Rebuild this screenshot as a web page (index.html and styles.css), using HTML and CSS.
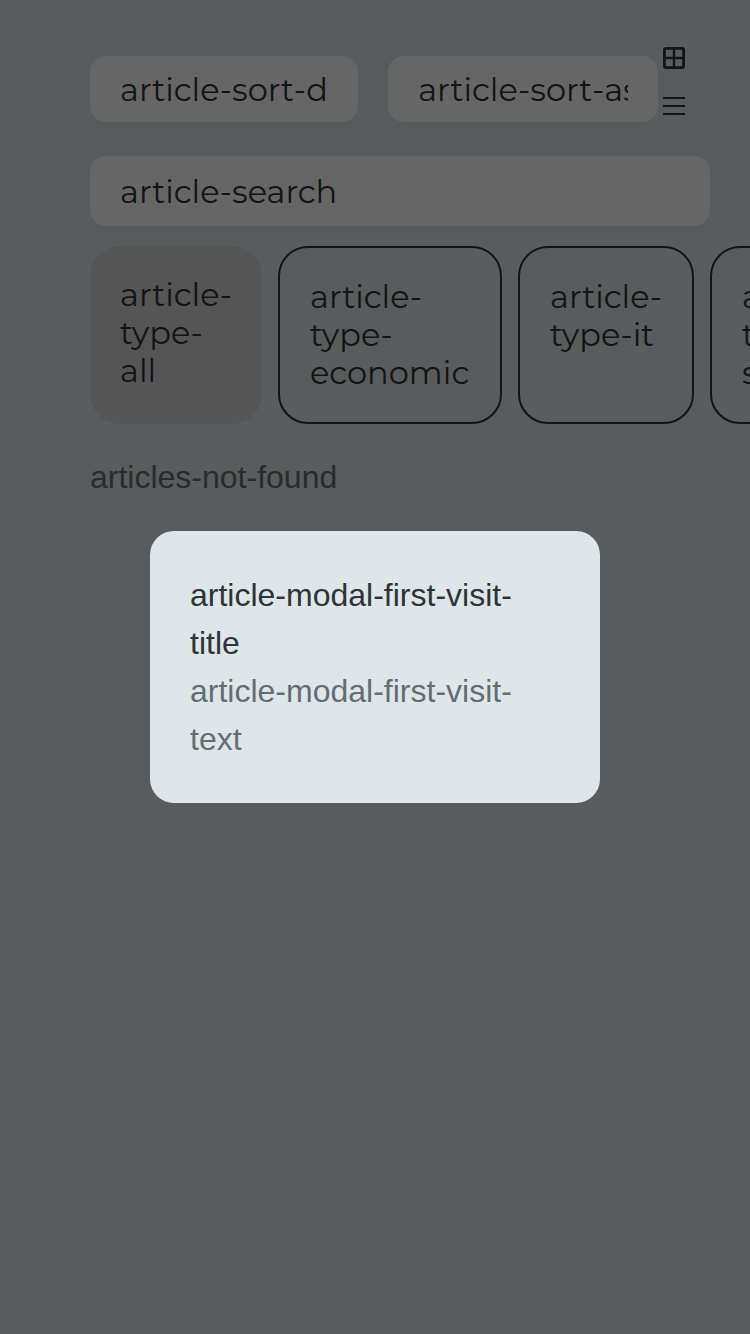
FILE: index.html
```html
<!DOCTYPE html>
<html lang="en">
<head>
<meta charset="utf-8">
<meta name="viewport" content="width=device-width, initial-scale=1">
<title>Articles</title>
<link rel="stylesheet" href="styles.css">
</head>
<body>
<main class="page">
  <div class="toolbar">
    <input class="field field-desc" type="text" aria-label="Sort descending" placeholder="article-sort-desc">
    <input class="field field-asc" type="text" aria-label="Sort ascending" placeholder="article-sort-asc">
    <div class="views">
      <button class="view" type="button" aria-label="Grid view">
        <svg width="22" height="22" viewBox="0 0 22 22" fill="none" stroke="currentColor"><rect x="1.4" y="1.4" width="19.2" height="19.2" rx="1.6" stroke-width="2.8"/><path d="M11 2v18M2 11h18" stroke-width="2.4"/></svg>
      </button>
      <button class="view" type="button" aria-label="List view">
        <svg width="22" height="22" viewBox="0 0 22 22" fill="none" stroke="currentColor" stroke-width="2"><path d="M0 3h22M0 11h22M0 19h22"/></svg>
      </button>
    </div>
  </div>
  <input class="field search" type="search" aria-label="Search" placeholder="article-search">
  <div class="types">
    <button class="type type-selected" type="button">article-type-all</button>
    <button class="type type-wide" type="button">article-type-economic</button>
    <button class="type" type="button">article-type-it</button>
    <button class="type" type="button">article-type-science</button>
  </div>
  <p class="empty">articles-not-found</p>
</main>
<div class="overlay">
  <section class="modal" role="dialog" aria-modal="true" aria-labelledby="modal-title">
    <h2 class="modal-title" id="modal-title">article-modal-first-visit-title</h2>
    <p class="modal-text">article-modal-first-visit-text</p>
  </section>
</div>
</body>
</html>
```

FILE: styles.css
```css
:root {
  --bg: #dfe6e9;
  --ink: #2d3436;
  --muted: #636e72;
  --ui-font: Montserrat, Inter, sans-serif;
}

* {
  box-sizing: border-box;
}

body {
  margin: 0;
  background: var(--bg);
  color: var(--ink);
  font: 32px/48px "Liberation Sans", Arial, sans-serif;
  overflow: hidden;
}

.page {
  min-height: 100vh;
  padding: 46px 40px 40px 90px;
}

.toolbar {
  display: flex;
  align-items: flex-end;
  margin-bottom: 34px;
  padding-right: 25px;
}

.field {
  min-width: 0;
  height: 66px;
  padding: 0 30px;
  border: 0;
  border-radius: 16px;
  background: #fff;
  color: var(--ink);
  font: 400 32px/38px var(--ui-font);
  outline: 0;
}

.field::placeholder {
  color: var(--ink);
  opacity: 1;
}

.field-desc {
  flex: 134;
  margin-right: 30px;
}

.field-asc {
  flex: 135;
  margin-right: 5px;
}

.views {
  display: grid;
  align-content: start;
  gap: 24px;
  height: 76px;
}

.view {
  display: block;
  width: 22px;
  height: 24px;
  padding: 1px 0;
  border: 0;
  background: none;
  color: var(--ink);
}

.view svg {
  display: block;
}

.search {
  display: block;
  width: 100%;
  height: 70px;
  margin-bottom: 20px;
  appearance: none;
}

.types {
  display: flex;
  gap: 16px;
  margin-right: -40px;
  margin-bottom: 29px;
  overflow: hidden;
}

.type {
  display: flex;
  flex: none;
  align-items: flex-start;
  width: 176px;
  padding: 30px;
  border: 2px solid var(--ink);
  border-radius: 30px;
  background: none;
  color: var(--ink);
  font: 400 32px/38px var(--ui-font);
  text-align: left;
}

.type-selected {
  width: 172px;
  border: 0;
  background: #d4d4d4;
}

.type-wide {
  width: 224px;
}

.empty {
  margin: 0;
  color: var(--muted);
}

.overlay {
  position: fixed;
  inset: 0;
  display: flex;
  align-items: center;
  justify-content: center;
  background: rgba(0, 0, 0, 0.6);
}

.modal {
  width: 60%;
  padding: 40px;
  border-radius: 24px;
  background: var(--bg);
}

.modal-title,
.modal-text {
  margin: 0;
  font-size: 32px;
  font-weight: 400;
}

.modal-text {
  color: var(--muted);
}
```
